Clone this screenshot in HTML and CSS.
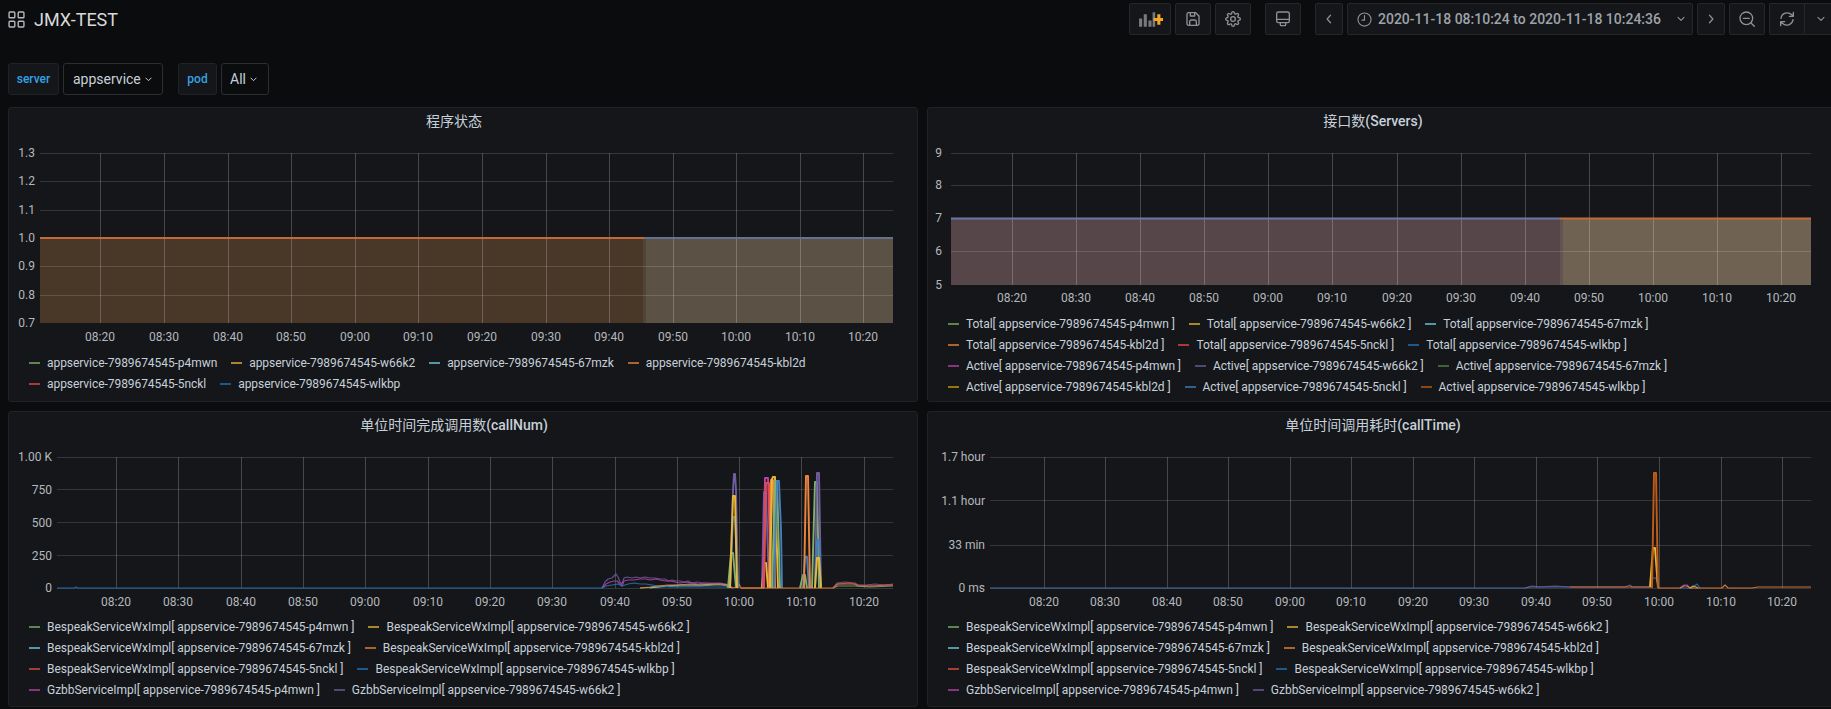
FILE: index.html
```html
<!DOCTYPE html>
<html lang="zh">
<head>
<meta charset="utf-8">
<title>JMX-TEST</title>
<link rel="stylesheet" href="styles.css">
</head>
<body>
<div class="page">
  <header class="topbar">
    <div class="brand">
      <svg class="brand-icon" viewBox="0 0 16 16"><rect x="1" y="1" width="5.4" height="5.4" rx=".8"/><rect x="9.6" y="1" width="5.4" height="5.4" rx=".8"/><rect x="1" y="9.6" width="5.4" height="5.4" rx=".8"/><rect x="9.6" y="9.6" width="5.4" height="5.4" rx=".8"/></svg>
      <h1 class="brand-title">JMX-TEST</h1>
    </div>
    <div class="tools">
      <div class="btn w42"><svg class="ico-add" viewBox="0 0 24 16"><path class="bar" d="M1 7h3v8H1zM5.500 3h3v12h-3zM10 9h3v6h-3zM14 1h2.500v14H14z"/><path class="plus" d="M15 6.500h3.500V3h3v3.500H25v3h-3.500V13h-3V9.500H15z"/></svg></div>
      <div class="btn w36"><svg class="ico" viewBox="0 0 24 24"><path d="M5 2.500h11l5 5V19a2.500 2.500 0 0 1-2.500 2.500h-13A2.500 2.500 0 0 1 3 19V5a2.500 2.500 0 0 1 2-2.500z"/><path d="M7 21.500V16a2.500 2.500 0 0 1 2.500-2.500h5A2.500 2.500 0 0 1 17 16v5.500M8 3v4.500h6.500V3"/></svg></div>
      <div class="btn w36"><svg class="ico" viewBox="0 0 24 24"><circle cx="12" cy="12" r="3.500"/><path d="M19.400 15a1.650 1.650 0 0 0 .33 1.820l.06.06a2 2 0 0 1 0 2.830 2 2 0 0 1-2.830 0l-.06-.06a1.650 1.650 0 0 0-1.820-.33 1.650 1.650 0 0 0-1 1.510V21a2 2 0 0 1-2 2 2 2 0 0 1-2-2v-.09A1.650 1.650 0 0 0 9 19.400a1.650 1.650 0 0 0-1.820.33l-.06.06a2 2 0 0 1-2.830 0 2 2 0 0 1 0-2.830l.06-.06a1.650 1.650 0 0 0 .33-1.820 1.650 1.650 0 0 0-1.510-1H3a2 2 0 0 1-2-2 2 2 0 0 1 2-2h.09A1.650 1.650 0 0 0 4.600 9a1.650 1.650 0 0 0-.33-1.820l-.06-.06a2 2 0 0 1 0-2.830 2 2 0 0 1 2.830 0l.06.06a1.650 1.650 0 0 0 1.820.33H9a1.650 1.650 0 0 0 1-1.510V3a2 2 0 0 1 2-2 2 2 0 0 1 2 2v.09a1.650 1.650 0 0 0 1 1.510 1.650 1.650 0 0 0 1.820-.33l.06-.06a2 2 0 0 1 2.830 0 2 2 0 0 1 0 2.830l-.06.06a1.650 1.650 0 0 0-.33 1.820V9a1.650 1.650 0 0 0 1.510 1H21a2 2 0 0 1 2 2 2 2 0 0 1-2 2h-.09a1.650 1.650 0 0 0-1.510 1z"/></svg></div>
      <div class="btn w36 gap-l"><svg class="ico" viewBox="0 0 24 24"><rect x="2.500" y="1.500" width="19" height="16" rx="2.500"/><path d="M2.500 12.500h19M8 17.500v3a1.500 1.500 0 0 0 1.500 1.500h5a1.500 1.500 0 0 0 1.500-1.500v-3"/></svg></div>
      <div class="btn w28 gap-l"><svg class="ico-sm" viewBox="0 0 10 16"><path d="M7 3 2.500 8 7 13"/></svg></div>
      <div class="btn time">
        <svg class="ico clock" viewBox="0 0 24 24"><circle cx="12" cy="12" r="10.500"/><path d="M12 5.500V13H8"/></svg>
        <span class="time-text">2020-11-18 08:10:24 to 2020-11-18 10:24:36</span>
        <svg class="chev" viewBox="0 0 12 8"><path d="M1.500 1.500 6 6l4.500-4.500"/></svg>
      </div>
      <div class="btn w28"><svg class="ico-sm" viewBox="0 0 10 16"><path d="M3 3l4.500 5L3 13"/></svg></div>
      <div class="btn w36"><svg class="ico zoom" viewBox="0 0 24 24"><circle cx="11" cy="11" r="9.500"/><path d="M6.500 11h9M18 18l5 5"/></svg></div>
      <div class="refresh">
        <div class="btn w36 join-l"><svg class="ico" viewBox="0 0 24 24"><path d="M3 11a9.500 9.500 0 0 1 16-5.500L21.500 8M21.500 2v6h-6M21 13a9.500 9.500 0 0 1-16 5.500L2.500 16M2.500 22v-6h6"/></svg></div>
        <div class="btn w33 join-r"><svg class="chev" viewBox="0 0 12 8"><path d="M1.500 1.500 6 6l4.500-4.500"/></svg></div>
      </div>
    </div>
  </header>

  <div class="vars">
    <div class="var-label">server</div>
    <div class="var-value w-app">appservice<svg class="chev-xs" viewBox="0 0 12 8"><path d="M1.500 1.500 6 6l4.500-4.500"/></svg></div>
    <div class="var-label pod">pod</div>
    <div class="var-value w-all">All<svg class="chev-xs" viewBox="0 0 12 8"><path d="M1.500 1.500 6 6l4.500-4.500"/></svg></div>
  </div>

  <main class="grid">
    <section class="panel">
      <h2 class="panel-title">程序状态</h2>
      <svg class="plot tall" viewBox="9 136 908 216">
        <rect class="f1a" x="40" y="238" width="603" height="85"/>
        <rect class="f1m" x="643" y="238" width="3" height="85"/>
        <rect class="f1b" x="646" y="238" width="247" height="85"/>
        <path class="gh" d="M40 153.500H893M40 181.500H893M40 210.500H893M40 238.500H893M40 266.500H893M40 295.500H893"/>
        <path class="gv" d="M100.500 153V323M164.500 153V323M228.500 153V323M291.500 153V323M355.500 153V323M418.500 153V323M482.500 153V323M546.500 153V323M609.500 153V323M673.500 153V323M736.500 153V323M800.500 153V323M863.500 153V323"/>
        <path class="ln orange" d="M40 238H644"/><path class="ln steel" d="M644 238H893"/>
        <g class="yl"><text x="35" y="157">1.3</text><text x="35" y="185">1.2</text><text x="35" y="214">1.1</text><text x="35" y="242">1.0</text><text x="35" y="270">0.9</text><text x="35" y="299">0.8</text><text x="35" y="327">0.7</text></g>
        <g class="xl"><text x="100" y="341">08:20</text><text x="164" y="341">08:30</text><text x="228" y="341">08:40</text><text x="291" y="341">08:50</text><text x="355" y="341">09:00</text><text x="418" y="341">09:10</text><text x="482" y="341">09:20</text><text x="546" y="341">09:30</text><text x="609" y="341">09:40</text><text x="673" y="341">09:50</text><text x="736" y="341">10:00</text><text x="800" y="341">10:10</text><text x="863" y="341">10:20</text></g>
      </svg>
      <div class="legend tight">
        <div class="row"><span class="item"><i class="c1"></i>appservice-7989674545-p4mwn</span><span class="item"><i class="c2"></i>appservice-7989674545-w66k2</span><span class="item"><i class="c3"></i>appservice-7989674545-67mzk</span><span class="item"><i class="c4"></i>appservice-7989674545-kbl2d</span></div>
        <div class="row"><span class="item"><i class="c5"></i>appservice-7989674545-5nckl</span><span class="item"><i class="c6"></i>appservice-7989674545-wlkbp</span></div>
      </div>
    </section>

    <section class="panel">
      <h2 class="panel-title">接口数<span class="lat">(Servers)</span></h2>
      <svg class="plot mid" viewBox="928 136 908 177">
        <rect class="f2a" x="951" y="218" width="609" height="67"/>
        <rect class="f2m" x="1560" y="218" width="3" height="67"/>
        <rect class="f2b" x="1563" y="218" width="248" height="67"/>
        <path class="gh" d="M951 153.500H1811M951 185.500H1811M951 218.500H1811M951 251.500H1811"/>
        <path class="gv" d="M1012.500 153V285M1076.500 153V285M1140.500 153V285M1204.500 153V285M1268.500 153V285M1332.500 153V285M1397.500 153V285M1461.500 153V285M1525.500 153V285M1589.500 153V285M1653.500 153V285M1717.500 153V285M1781.500 153V285"/>
        <path class="ln steel2" d="M951 218.500H1560"/><path class="ln orange" d="M1560 218.500H1811"/>
        <g class="yl"><text x="942" y="157">9</text><text x="942" y="189">8</text><text x="942" y="222">7</text><text x="942" y="255">6</text><text x="942" y="289">5</text></g>
        <g class="xl"><text x="1012" y="302">08:20</text><text x="1076" y="302">08:30</text><text x="1140" y="302">08:40</text><text x="1204" y="302">08:50</text><text x="1268" y="302">09:00</text><text x="1332" y="302">09:10</text><text x="1397" y="302">09:20</text><text x="1461" y="302">09:30</text><text x="1525" y="302">09:40</text><text x="1589" y="302">09:50</text><text x="1653" y="302">10:00</text><text x="1717" y="302">10:10</text><text x="1781" y="302">10:20</text></g>
      </svg>
      <div class="legend tight">
        <div class="row"><span class="item"><i class="c1"></i>Total[ appservice-7989674545-p4mwn ]</span><span class="item"><i class="c2"></i>Total[ appservice-7989674545-w66k2 ]</span><span class="item"><i class="c3"></i>Total[ appservice-7989674545-67mzk ]</span></div>
        <div class="row"><span class="item"><i class="c4"></i>Total[ appservice-7989674545-kbl2d ]</span><span class="item"><i class="c5"></i>Total[ appservice-7989674545-5nckl ]</span><span class="item"><i class="c6"></i>Total[ appservice-7989674545-wlkbp ]</span></div>
        <div class="row"><span class="item"><i class="c7"></i>Active[ appservice-7989674545-p4mwn ]</span><span class="item"><i class="c8"></i>Active[ appservice-7989674545-w66k2 ]</span><span class="item"><i class="c9"></i>Active[ appservice-7989674545-67mzk ]</span></div>
        <div class="row"><span class="item"><i class="c10"></i>Active[ appservice-7989674545-kbl2d ]</span><span class="item"><i class="c11"></i>Active[ appservice-7989674545-5nckl ]</span><span class="item"><i class="c12"></i>Active[ appservice-7989674545-wlkbp ]</span></div>
      </div>
    </section>

    <section class="panel">
      <h2 class="panel-title">单位时间完成调用数<span class="lat">(callNum)</span></h2>
      <svg class="plot" viewBox="9 440 908 176">
        <path class="gh" d="M57 457.500H893M57 489.500H893M57 522.500H893M57 555.500H893M57 588.500H893"/>
        <path class="gv" d="M116.500 457V588M178.500 457V588M241.500 457V588M303.500 457V588M365.500 457V588M428.500 457V588M490.500 457V588M552.500 457V588M615.500 457V588M677.500 457V588M739.500 457V588M801.500 457V588M864.500 457V588"/>
        <polyline class="n s1" points="640,588 660,587 680,586 700,586 715,585 725,585 730,587"/>
        <polyline class="n s3" points="650,588 665,586 680,585 700,585 720,584 730,587"/>
        <polyline class="n s8" points="602,588 605,582 608,579 612,578 614,576 616,574 618,577 620,582 622,584 624,578 627,577 632,578 636,577 640,578 645,577 650,578 655,578 660,579 665,579 668,581 672,580 676,581 680,581 684,582 688,581 692,583 697,582 702,583 708,583 714,583 720,583 726,584 730,587 733,587"/>
        <polyline class="n s7" points="602,588 606,584 610,582 614,581 617,581 620,584 622,586 624,581 628,580 634,580 640,579 646,579 650,580 656,579 660,580 665,581 670,581 675,582 680,583 686,582 692,583 698,584 704,583 712,584 720,584 728,586 731,587"/>
        <polyline class="n s6" points="57,588 74,588 76,587 78,588 602,588 606,586 612,585 618,584 622,586 628,584 634,583 640,584 646,584 652,585 658,586 664,586 670,587 680,587 730,587"/>
        <polyline class="n s4" points="640,588 650,587 658,586 668,585 678,585 690,584 700,585 712,584 722,584 728,585 732,588 737,587 739,584 741,588 764,588"/>
        <polyline class="s s8" points="730,588 733,490 734,474 735,474 736,490 738,588"/>
        <polyline class="s s11" points="730,588 733,517 735,517 738,588"/>
        <polyline class="s s1" points="728,588 731,553 733,553 736,588"/>
        <polyline class="s s2" points="730,588 733,496 735,496 737,588"/>
        <polyline class="s s8" points="762,588 764,492 766,492 769,588"/>
        <polyline class="s s2" points="762,588 764,563 766,563 768,588"/>
        <polyline class="s s7" points="763,588 765,478 768,478 771,588"/>
        <polyline class="s s5" points="764,588 766,483 769,483 771,588"/>
        <polyline class="s s4" points="769,588 771,480 773,480 775,588"/>
        <polyline class="s s2" points="770,588 772,479 773,477 775,477 778,588"/>
        <polyline class="s s1" points="772,588 775,481 777,481 780,588"/>
        <polyline class="s s11" points="774,588 777,481 779,481 781,530 782,588"/>
        <polyline class="s s1" points="800,588 803,575 805,575 807,588"/>
        <polyline class="s s11" points="803,588 805,557 807,557 809,588"/>
        <polyline class="s s4" points="804,588 806,476 808,476 810,588"/>
        <polyline class="s s1" points="812,588 815,482 817,482 819,588"/>
        <polyline class="s s8" points="815,588 817,473 819,473 821,588"/>
        <polyline class="s s11" points="815,588 817,540 819,540 821,588"/>
        <polyline class="s s2" points="815,588 817,558 819,558 821,588"/>
        <polyline class="n s4" points="741,588 833,588 837,584 845,584 855,584 858,586 866,586 875,586 885,585 893,585"/>
        <polyline class="n s1" points="833,588 838,586 856,586 870,587 893,586"/>
        <polyline class="n s8" points="833,588 837,583 845,582 855,583 858,585 866,585 875,584 885,585 893,584"/>
        <polyline class="n s5" points="833,588 838,584 850,583 858,585 870,586 893,585"/>
        <g class="yl"><text x="52" y="461">1.00 K</text><text x="52" y="494">750</text><text x="52" y="527">500</text><text x="52" y="560">250</text><text x="52" y="592">0</text></g>
        <g class="xl"><text x="116" y="606">08:20</text><text x="178" y="606">08:30</text><text x="241" y="606">08:40</text><text x="303" y="606">08:50</text><text x="365" y="606">09:00</text><text x="428" y="606">09:10</text><text x="490" y="606">09:20</text><text x="552" y="606">09:30</text><text x="615" y="606">09:40</text><text x="677" y="606">09:50</text><text x="739" y="606">10:00</text><text x="801" y="606">10:10</text><text x="864" y="606">10:20</text></g>
      </svg>
      <div class="legend slim">
        <div class="row"><span class="item"><i class="c1"></i>BespeakServiceWxImpl[ appservice-7989674545-p4mwn ]</span><span class="item"><i class="c2"></i>BespeakServiceWxImpl[ appservice-7989674545-w66k2 ]</span></div>
        <div class="row"><span class="item"><i class="c3"></i>BespeakServiceWxImpl[ appservice-7989674545-67mzk ]</span><span class="item"><i class="c4"></i>BespeakServiceWxImpl[ appservice-7989674545-kbl2d ]</span></div>
        <div class="row"><span class="item"><i class="c5"></i>BespeakServiceWxImpl[ appservice-7989674545-5nckl ]</span><span class="item"><i class="c6"></i>BespeakServiceWxImpl[ appservice-7989674545-wlkbp ]</span></div>
        <div class="row"><span class="item"><i class="c7"></i>GzbbServiceImpl[ appservice-7989674545-p4mwn ]</span><span class="item"><i class="c8"></i>GzbbServiceImpl[ appservice-7989674545-w66k2 ]</span></div>
      </div>
    </section>

    <section class="panel">
      <h2 class="panel-title">单位时间调用耗时<span class="lat">(callTime)</span></h2>
      <svg class="plot" viewBox="928 440 908 176">
        <path class="gh" d="M990 457.500H1811M990 500.500H1811M990 545.500H1811M990 588.500H1811"/>
        <path class="gv" d="M1044.500 457V588M1105.500 457V588M1167.500 457V588M1228.500 457V588M1290.500 457V588M1351.500 457V588M1413.500 457V588M1474.500 457V588M1536.500 457V588M1597.500 457V588M1659.500 457V588M1721.500 457V588M1782.500 457V588"/>
        <polyline class="n s11" points="990,588 1525,588 1530,587 1570,587"/>
        <polyline class="n s8" points="1525,588 1532,586 1540,587 1555,586 1570,587 1625,587 1630,585 1632,587 1650,587 1653,578 1656,578 1659,588"/>
        <polyline class="n s6" points="1680,588 1690,588 1693,587 1697,584 1700,588"/>
        <polyline class="n s7" points="1680,588 1684,585 1687,585 1690,588"/>
        <polyline class="s s2" points="1650,587 1653,548 1655,548 1658,588"/>
        <polyline class="n s2" points="1690,588 1693,586 1696,587 1698,588"/>
        <polyline class="n s4" points="1570,587 1650,587 1653,587"/>
        <polyline class="s s12" points="1652,588 1654,473 1656,473 1658,588"/>
        <polyline class="n s4" points="1658,588 1680,588 1684,586 1687,586 1690,588 1722,588 1725,585 1728,588 1752,588 1758,587 1811,587"/>
        <g class="yl"><text x="985" y="461">1.7 hour</text><text x="985" y="505">1.1 hour</text><text x="985" y="549">33 min</text><text x="985" y="592">0 ms</text></g>
        <g class="xl"><text x="1044" y="606">08:20</text><text x="1105" y="606">08:30</text><text x="1167" y="606">08:40</text><text x="1228" y="606">08:50</text><text x="1290" y="606">09:00</text><text x="1351" y="606">09:10</text><text x="1413" y="606">09:20</text><text x="1474" y="606">09:30</text><text x="1536" y="606">09:40</text><text x="1597" y="606">09:50</text><text x="1659" y="606">10:00</text><text x="1721" y="606">10:10</text><text x="1782" y="606">10:20</text></g>
      </svg>
      <div class="legend slim">
        <div class="row"><span class="item"><i class="c1"></i>BespeakServiceWxImpl[ appservice-7989674545-p4mwn ]</span><span class="item"><i class="c2"></i>BespeakServiceWxImpl[ appservice-7989674545-w66k2 ]</span></div>
        <div class="row"><span class="item"><i class="c3"></i>BespeakServiceWxImpl[ appservice-7989674545-67mzk ]</span><span class="item"><i class="c4"></i>BespeakServiceWxImpl[ appservice-7989674545-kbl2d ]</span></div>
        <div class="row"><span class="item"><i class="c5"></i>BespeakServiceWxImpl[ appservice-7989674545-5nckl ]</span><span class="item"><i class="c6"></i>BespeakServiceWxImpl[ appservice-7989674545-wlkbp ]</span></div>
        <div class="row"><span class="item"><i class="c7"></i>GzbbServiceImpl[ appservice-7989674545-p4mwn ]</span><span class="item"><i class="c8"></i>GzbbServiceImpl[ appservice-7989674545-w66k2 ]</span></div>
      </div>
    </section>
  </main>
</div>
</body>
</html>
```

FILE: styles.css
```css
* { box-sizing: border-box; }
html, body { margin: 0; height: 100%; overflow: hidden; }
body {
  background: #0b0c0e;
  color: #c7d0d9;
  font-family: Roboto, "Noto Sans CJK SC", sans-serif;
  font-size: 12px;
}
.page { width: 1837px; }

/* top bar */
.topbar { display: flex; height: 38px; padding-top: 3px; }
.brand { flex: 1; display: flex; align-items: center; height: 32px; padding-left: 8px; }
.brand-icon { width: 17px; height: 17px; fill: none; stroke: #b5b8bd; stroke-width: 1.300; }
.brand-title { margin: 0 0 0 9px; font-size: 18px; font-weight: 400; color: #d8d9da; }
.tools { display: flex; gap: 4px; }
.btn {
  display: flex; align-items: center; justify-content: center;
  height: 32px;
  background: #141619;
  border: 1px solid #25272b;
  border-radius: 2px;
}
.w42 { width: 42px; } .w36 { width: 36px; } .w33 { width: 33px; } .w28 { width: 28px; }
.gap-l { margin-left: 10px; }
.time { width: 346px; justify-content: flex-start; padding-left: 9px; }
.time-text { margin-left: 6px; font-size: 14px; font-weight: 500; color: #9ea3aa; white-space: nowrap; }
.refresh { display: flex; }
.join-l { border-radius: 2px 0 0 2px; border-right: 0; width: 35px; }
.join-r { border-radius: 0 2px 2px 0; }
.ico { width: 16px; height: 16px; fill: none; stroke: #8e9196; stroke-width: 2; stroke-linecap: round; stroke-linejoin: round; }
.clock { width: 15px; height: 15px; stroke-width: 1.800; }
.zoom { width: 16px; height: 16px; }
.ico-sm { width: 8px; height: 12px; fill: none; stroke: #8e9196; stroke-width: 1.600; stroke-linecap: round; stroke-linejoin: round; }
.ico-add { width: 25px; height: 17px; }
.bar { fill: #77797d; }
.plus { fill: #f5a623; }
.chev { width: 8px; height: 6px; fill: none; stroke: #8e9196; stroke-width: 1.600; stroke-linecap: round; stroke-linejoin: round; }
.time .chev { margin-left: 16px; }

/* variables */
.vars { display: flex; align-items: stretch; height: 32px; margin: 25px 0 12px 8px; }
.var-label {
  display: flex; align-items: center; justify-content: center;
  width: 51px;
  background: #141619;
  border: 1px solid #202226;
  border-radius: 3px;
  color: #33a2e5;
  font-size: 12px;
  font-weight: 500;
}
.var-label.pod { width: 39px; margin-left: 15px; }
.var-value {
  display: flex; align-items: center;
  margin-left: 4px;
  padding-left: 9px;
  background: #0b0c0e;
  border: 1px solid #2c2e33;
  border-radius: 3px;
  font-size: 14px;
  color: #c7d0d9;
}
.w-app { width: 100px; }
.w-all { width: 48px; padding-left: 8px; }
.chev-xs { width: 7px; height: 5px; margin-left: 4px; fill: none; stroke: #c7d0d9; stroke-width: 1.700; stroke-linecap: round; stroke-linejoin: round; }

/* panels */
.grid {
  display: grid;
  grid-template-columns: 910px 910px;
  grid-template-rows: 295px 296px;
  gap: 9px;
  margin-left: 8px;
}
.panel {
  background: #141619;
  border: 1px solid #202226;
  border-radius: 3px;
  overflow: hidden;
}
.panel-title {
  height: 28px;
  margin: 0;
  padding: 0 18px 0 0;
  font-size: 14px;
  font-weight: 400;
  line-height: 27px;
  text-align: center;
  color: #c7d0d9;
}
.lat { font-weight: 500; }
.plot { display: block; width: 908px; height: 176px; }
.plot.mid { height: 177px; }
.plot.tall { height: 216px; }
.plot text { font-family: Roboto, sans-serif; font-size: 12px; fill: #b4b8bd; }
.yl text { text-anchor: end; }
.xl text { text-anchor: middle; }
.gh { fill: none; stroke: rgba(255,255,255,.14); stroke-width: 1; }
.gv { fill: none; stroke: rgba(255,255,255,.21); stroke-width: 1; }
.f1a { fill: #493727; }
.f1m { fill: #514537; }
.f1b { fill: #5b5245; }
.f2a { fill: #574649; }
.f2m { fill: #63544e; }
.f2b { fill: #6f6253; }
.ln { fill: none; stroke-width: 2; }
.orange { stroke: #c46a38; }
.steel { stroke: #66718f; }
.steel2 { stroke: #6a78a8; }
.s { fill: none; stroke-width: 1.900; stroke-linejoin: round; }
.n { fill: none; stroke-width: 1.200; stroke-linejoin: round; opacity: .85; }
.s1 { stroke: #7eb26d; } .s2 { stroke: #eab839; } .s3 { stroke: #6ed0e0; } .s4 { stroke: #ef843c; }
.s5 { stroke: #e24d42; } .s6 { stroke: #1f78c1; } .s7 { stroke: #ba43a9; }
.s8 { stroke: #705da0; } .s11 { stroke: #447ebc; } .s12 { stroke: #c15c17; }

/* legends */
.legend { padding-left: 20px; }
.legend.tight { letter-spacing: -.06px; }
.legend.slim { letter-spacing: -.03px; }
.row { display: flex; height: 21px; align-items: center; white-space: nowrap; }
.item { display: flex; align-items: center; margin-right: 14px; color: #c7d0d9; font-size: 12px; }
.item i { display: block; width: 11px; height: 2px; margin-right: 7px; opacity: .7; }
.c1 { background: #7eb26d; } .c2 { background: #eab839; } .c3 { background: #6ed0e0; }
.c4 { background: #ef843c; } .c5 { background: #e24d42; } .c6 { background: #1f78c1; }
.c7 { background: #ba43a9; } .c8 { background: #705da0; } .c9 { background: #508642; }
.c10 { background: #cca300; } .c11 { background: #447ebc; } .c12 { background: #c15c17; }
```
